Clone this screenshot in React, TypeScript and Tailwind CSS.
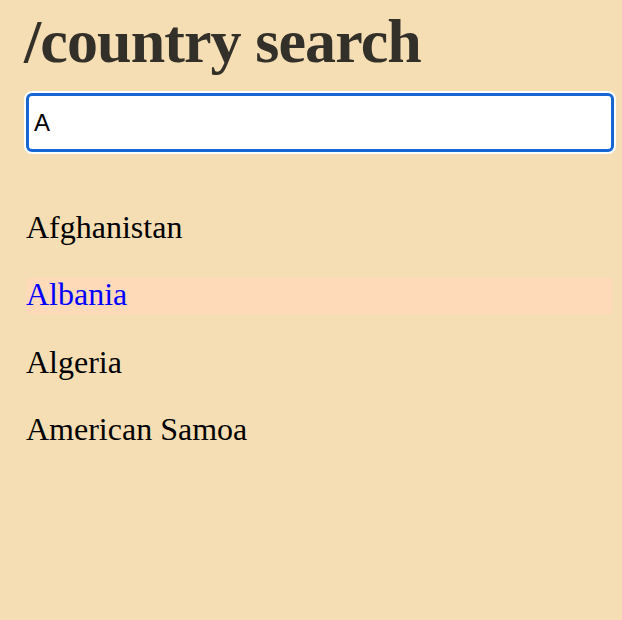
import React, { useState } from 'react';

const countries = ['Afghanistan', 'Albania', 'Algeria', 'American Samoa'];

export default function App() {
  const [query, setQuery] = useState('A');
  const active = 'Albania';

  return (
    <div className="min-h-[620px] w-full bg-[#f5deb3]">
      <div className="ml-[26px] w-[588px] pt-[6px]">
        <h1 className="-ml-[2px] font-['Liberation_Serif',serif] text-[62px] font-bold leading-[70px] tracking-[-0.9px] text-[#33302a]">
          /country search
        </h1>
        <input
          value={query}
          onChange={(e) => setQuery(e.target.value)}
          className="mt-[17px] block h-[59px] w-full rounded-[6px] border-[3px] border-[#1766d1] bg-white px-[5px] font-['Liberation_Sans',Arial,sans-serif] text-[24px] text-black shadow-[0_0_0_2px_#ffffff] outline-none"
        />
        <ul className="mt-[58.7px] flex flex-col gap-[31.5px]">
          {countries.map((c) => (
            <li
              key={c}
              className={`h-[36px] w-[586px] font-['Liberation_Serif',serif] text-[32px] leading-[33px] ${
                c === active ? 'bg-[#ffdab9] text-[#0000ff]' : 'text-black'
              }`}
            >
              {c}
            </li>
          ))}
        </ul>
      </div>
    </div>
  );
}
